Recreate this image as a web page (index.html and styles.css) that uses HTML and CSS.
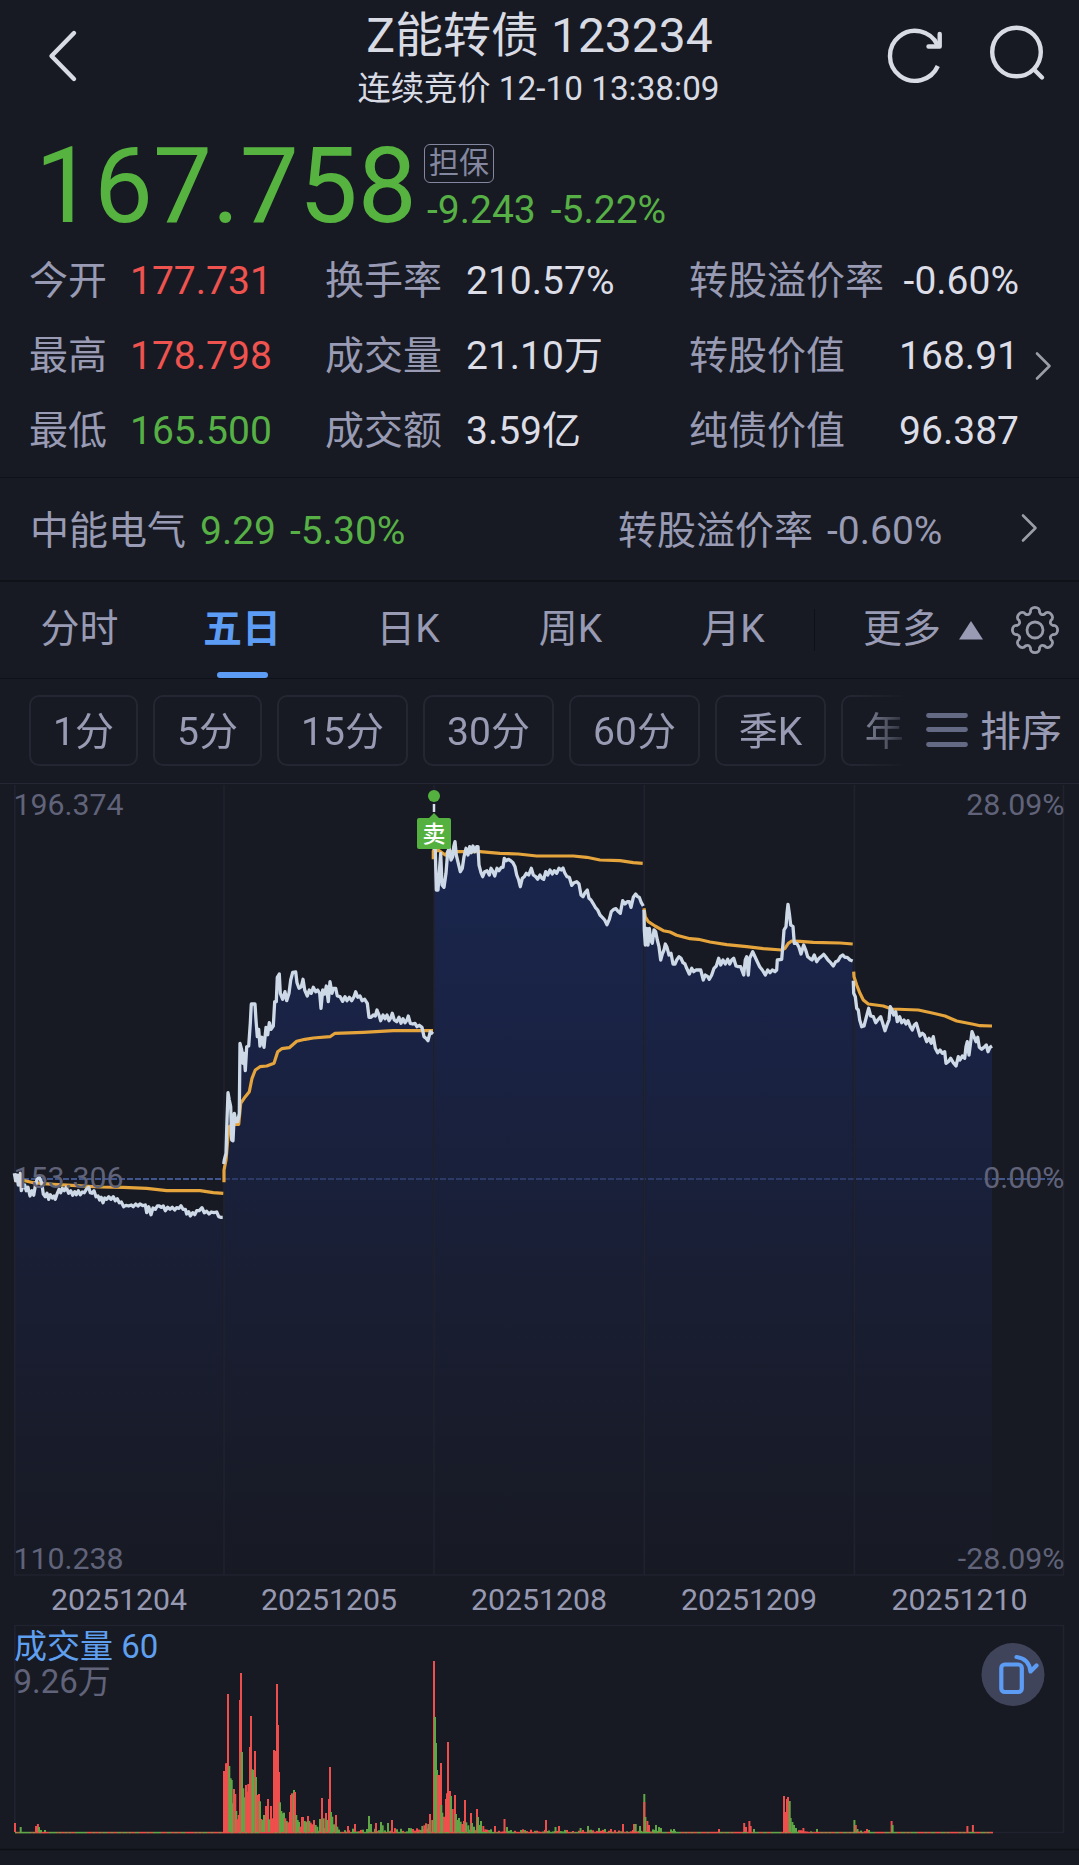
FILE: index.html
```html
<!DOCTYPE html>
<html lang="zh-CN">
<head>
<meta charset="utf-8">
<title>Z能转债 123234</title>
<link rel="stylesheet" href="styles.css">
</head>
<body>
<header class="header">
  <svg class="icon" width="230" height="120" viewBox="0 0 230 120"><path class="ico-line" d="M74 33 51.500 56 74 79"/></svg>
  <div class="heading">
    <h1 class="title">Z能转债 123234</h1>
    <p class="subtitle">连续竞价 12-10 13:38:09</p>
  </div>
  <svg class="icon" width="230" height="120" viewBox="849 0 230 120">
    <path class="ico-line flat" d="M937.800 66A25 25 0 1 1 937.500 45"/>
    <path class="ico-line" d="M939.700 34v12.500H928.500"/>
    <circle class="ico-line" cx="1016.500" cy="52" r="24.300"/>
    <path class="ico-line" d="m1034 69.500 8 8"/>
  </svg>
</header>

<section class="quote down">
  <div class="price">167.758</div>
  <div class="quote-side">
    <span class="badge">担保</span>
    <div class="delta"><span>-9.243</span><span>-5.22%</span></div>
  </div>
</section>

<section class="stats">
  <div class="stats-grid">
    <span>今开</span><b class="up">177.731</b><span>换手率</span><b>210.57%</b><span>转股溢价率</span><b class="end">-0.60%</b>
    <span>最高</span><b class="up">178.798</b><span>成交量</span><b>21.10万</b><span>转股价值</span><b class="end">168.91</b>
    <span>最低</span><b class="down">165.500</b><span>成交额</span><b>3.59亿</b><span>纯债价值</span><b class="end">96.387</b>
  </div>
  <svg class="icon chevron" width="18" height="30" viewBox="0 0 18 30"><path class="ico-thin" d="M2 2.500 14.500 15 2 27.500"/></svg>
</section>

<section class="related">
  <span class="rel-name">中能电气</span><span class="rel-price down">9.29</span><span class="rel-change down">-5.30%</span>
  <span class="rel-label">转股溢价率</span><span class="rel-rate">-0.60%</span>
  <svg class="icon rel-arrow" width="18" height="30" viewBox="0 0 18 30"><path class="ico-thin" d="M2 2.500 14.500 15 2 27.500"/></svg>
</section>

<nav class="tabs">
  <span class="tab">分时</span>
  <span class="tab wide active">五日</span>
  <span class="tab wide">日K</span>
  <span class="tab">周K</span>
  <span class="tab wide">月K</span>
  <i class="tab-split"></i>
  <span class="more">更多</span>
  <svg class="icon tri" width="26" height="20" viewBox="0 0 26 20"><path d="M13 1 25 19.500H1z"/></svg>
  <svg class="icon gear" width="52" height="52" viewBox="-26 -26 52 52">
    <path id="gear" class="ico-gear"/>
    <circle class="ico-gear" r="8"/>
  </svg>
</nav>

<section class="periods">
  <div class="chips">
    <span class="chip w1">1分</span><span class="chip w1">5分</span><span class="chip w2">15分</span><span class="chip w2">30分</span><span class="chip w2">60分</span><span class="chip w3">季K</span><span class="chip w3">年K</span>
  </div>
  <svg class="icon bars" width="42" height="36" viewBox="0 0 42 36"><path d="M2.500 3.500h37M2.500 17.500h37M2.500 32.500h37"/></svg>
  <span class="sort">排序</span>
</section>

<svg class="chart" width="1079" height="1082" viewBox="0 783 1079 1082">
  <defs>
    <linearGradient id="fill" gradientUnits="userSpaceOnUse" x1="0" y1="840" x2="0" y2="1575">
      <stop offset="0" stop-color="#1a264f"/>
      <stop offset=".3" stop-color="#192242"/>
      <stop offset=".6" stop-color="#191e33"/>
      <stop offset="1" stop-color="#171a23"/>
    </linearGradient>
  </defs>
  <path class="rule" d="M0 783.500H1079"/>
  <path class="dash" d="M15 1179H1064"/>
  <g id="areas"></g>
  <path class="dash over" d="M224 1179H992"/>
  <path class="grid" d="M14.800 785V1575M224 785V1575M434 785V1575M644.300 785V1575M854.400 785V1575M1063.500 785V1575M14 1575H1064"/>
  <path class="grid" d="M14.800 1832.500V1625.500H1063.500V1832.500H14.800"/>
  <g id="lines"></g>
  <g class="axis">
    <text x="13.500" y="815">196.374</text>
    <text x="13.500" y="1187.500">153.306</text>
    <text x="13.500" y="1569">110.238</text>
    <text class="r" x="1064.500" y="815">28.09%</text>
    <text class="r" x="1064.500" y="1187.500">0.00%</text>
    <text class="r" x="1064.500" y="1569">-28.09%</text>
  </g>
  <g class="dates">
    <text x="119" y="1610">20251204</text>
    <text x="329" y="1610">20251205</text>
    <text x="539" y="1610">20251208</text>
    <text x="749" y="1610">20251209</text>
    <text x="959.500" y="1610">20251210</text>
  </g>
  <path class="leader" d="M434 804v8"/>
  <circle class="sell" cx="434" cy="796" r="6"/>
  <path class="sell" d="M419 818h10l5-5 5 5h10q2 0 2 2v27q0 2-2 2H419q-2 0-2-2v-27q0-2 2-2z"/>
  <text class="sell-text" x="434" y="842">卖</text>
  <text class="vol-title" x="14" y="1658">成交量 60</text>
  <text class="vol-max" x="13.500" y="1693">9.26万</text>
  <g id="volume"></g>
  <circle class="rotate-bg" cx="1013" cy="1674.500" r="31.500"/>
  <g class="rotate">
    <rect x="1001.300" y="1664.500" width="20.500" height="27.500" rx="3.500"/>
    <path d="M1016.500 1657q12.500 1.500 14 14.500l6-6"/>
  </g>
  <path class="edge" d="M0 1849.500H1079"/>
</svg>
<script src="chart.js"></script>
</body>
</html>
```
FILE: styles.css
```css
* { box-sizing: border-box; }
body {
  margin: 0;
  width: 1079px;
  height: 1865px;
  overflow: hidden;
  background: #171a22;
  color: #989bb3;
  font-family: Roboto, "Noto Sans CJK SC", sans-serif;
  font-size: 39px;
  line-height: 50px;
}
.icon { display: block; fill: none; flex: none; }
.ico-line { stroke: #d9dbe4; stroke-width: 4.4; stroke-linecap: round; stroke-linejoin: round; }
.ico-line.flat { stroke-linecap: butt; }
.ico-thin { stroke: #9b9ca6; stroke-width: 2.6; stroke-linecap: round; stroke-linejoin: round; }
.ico-gear { stroke: #989ba9; stroke-width: 2.8; stroke-linejoin: round; }
.up { color: #ef5350; }
.down { color: #56b045; }

.header { display: grid; grid-template-columns: 230px 1fr 230px; height: 120px; color: #d9dbe4; text-align: center; white-space: nowrap; }
.heading { padding-top: 10px; }
.title { margin: 0 0 8px; font-size: 48px; font-weight: 400; line-height: 51px; }
.subtitle { margin: 0 0 0 -2px; font-size: 33.3px; line-height: 40px; }

.quote { display: flex; height: 124px; padding: 16px 0 0 35px; }
.price { width: 389px; font-size: 105px; line-height: 101px; color: #56b340; }
.quote-side { padding-top: 8px; }
.badge { display: block; width: 70px; height: 39px; border: 1.500px solid #8487a0; border-radius: 6px; color: #8487a0; font-size: 30px; line-height: 36px; text-align: center; }
.delta { display: flex; gap: 15px; padding-left: 3px; margin-top: 7px; line-height: 40px; }

.stats { display: flex; height: 234px; border-bottom: 1.500px solid #0f1118; }
.stats-grid { display: grid; grid-template-columns: 101px 195px 141px 223px 200px 130px; grid-auto-rows: 75px; width: 1019px; padding-left: 29px; line-height: 75px; white-space: nowrap; flex: none; }
.stats-grid b { font-weight: 400; color: #dcdde6; }
.stats-grid .up { color: #ef5350; }
.stats-grid .down { color: #56b045; }
.stats-grid .end { text-align: right; }
.chevron { margin: 107px 0 0 16px; }

.related { display: flex; align-items: center; height: 104px; padding: 4px 0 0 30px; border-bottom: 2px solid #10121a; white-space: nowrap; }
.rel-name { width: 170px; }
.rel-price { width: 90px; }
.rel-change { width: 328px; }
.rel-label { width: 209px; }
.rel-rate { width: 194px; }
.rel-arrow { margin-top: -6px; }

.tabs { display: flex; height: 97px; border-bottom: 1.500px solid #0f1118; white-space: nowrap; line-height: 95px; }
.tab { width: 159px; text-align: center; display: flex; flex-direction: column; align-items: center; }
.tab.wide { width: 166px; }
.tab.active { color: #5c9cf5; font-weight: 700; }
.tab.active::after { content: ""; width: 51px; height: 6px; margin-top: -5px; border-radius: 3px; background: #5c9cf5; }
.tab-split { width: 1px; height: 42px; margin: 27px 0 0 -2px; background: #0e1017; }
.more { margin-left: 48px; width: 95px; }
.tri { fill: #989bb3; margin-top: 38px; }
.gear { margin: 22px 0 0 25px; }

.periods { display: flex; height: 104px; padding: 16px 0 0 29px; white-space: nowrap; }
.chips { display: flex; gap: 15px; width: 873px; overflow: hidden; -webkit-mask-image: linear-gradient(90deg, #000 825px, transparent 885px); mask-image: linear-gradient(90deg, #000 825px, transparent 885px); }
.chip { flex: none; height: 71px; border: 2px solid #242732; border-radius: 10px; line-height: 70px; text-align: center; }
.w1 { width: 109px; }
.w2 { width: 131px; }
.w3 { width: 111px; }
.bars { margin: 17px 0 0 24px; stroke: #646984; stroke-width: 4.8; stroke-linecap: round; }
.sort { margin-left: 12px; font-size: 41px; line-height: 74px; }

.chart { display: block; fill: none; }
.rule { stroke: #252833; stroke-width: 1.200; }
.grid { stroke: #20222f; stroke-width: 1.600; }
.edge { stroke: #0e1017; stroke-width: 1.500; }
.dash { stroke: #40568c; stroke-width: 1.800; stroke-dasharray: 6 2; }
.dash.over { stroke: #2b3a66; }
.area { fill: url(#fill); }
.avg { stroke: #e5a43c; stroke-width: 3.200; stroke-linejoin: round; }
.line { stroke: #ced9e8; stroke-width: 3.300; stroke-linejoin: round; }
.axis { fill: #606379; font-size: 30.3px; }
.axis .r { text-anchor: end; }
.dates { fill: #9699b1; font-size: 30.3px; text-anchor: middle; }
.leader { stroke: #d8dfec; stroke-width: 2.500; }
.sell { fill: #54b13f; }
.sell-text { fill: #fff; font-size: 23px; font-weight: 500; text-anchor: middle; }
.vol-title { fill: #5f9ff0; font-size: 33px; }
.vol-max { fill: #606379; font-size: 33px; }
.rotate-bg { fill: #40445a; }
.rotate { stroke: #5c9cf5; stroke-width: 4.200; stroke-linecap: round; stroke-linejoin: round; }
.red { fill: #ee4f4c; }
.green { fill: #5fa746; }
```
FILE: chart.js
```js
// Each session: origin in page pixels, points in thirds of a pixel.
const sessions = [
  { ox: 0, oy: 940,
    line: "43,700 47,722 51,705 55,735 58,712 61,700 64,752 69,735 74,735 79,752 84,742 90,768 96,752 101,766 106,738 111,718 118,712 125,728 130,762 136,770 141,760 146,778 151,764 157,774 162,768 166,778 172,760 177,748 182,758 187,745 193,752 199,742 206,760 212,752 218,766 224,755 229,764 235,752 241,764 247,756 253,758 259,748 266,742 271,758 276,760 282,752 288,770 294,768 299,780 304,772 309,788 314,774 320,778 326,770 333,778 340,770 346,782 352,776 358,788 364,786 371,800 378,796 386,798 394,795 400,800 407,792 414,798 420,792 428,797 436,795 440,818 446,800 453,824 459,804 466,808 472,798 478,798 484,802 490,798 496,812 503,802 510,808 517,802 524,810 530,803 537,805 543,797 549,808 556,808 560,822 566,815 571,828 578,818 584,824 590,812 598,812 606,803 613,818 620,814 627,822 634,816 642,818 650,816 656,830 663,832 668,832",
    avg: "43,722 75,722 100,728 160,733 230,737 300,741 370,742 440,745 500,752 600,752 640,758 670,760" },
  { ox: 0, oy: 940,
    line: "671,672 673,660 678,640 681,540 684,458 688,480 692,500 695,600 699,602 703,520 708,545 713,545 718,520 720,310 725,330 729,370 732,340 736,392 740,320 746,318 751,250 754,192 765,192 768,240 772,290 776,268 780,318 786,292 792,322 798,262 803,284 808,248 813,268 820,258 824,185 829,185 832,112 838,102 841,160 848,178 855,155 860,182 867,160 872,120 878,97 887,96 891,128 897,145 904,140 909,118 914,150 922,168 928,150 934,160 940,142 947,155 953,150 959,160 963,205 968,150 974,162 979,138 985,185 990,125 996,160 1000,145 1007,145 1012,168 1020,170 1028,184 1035,170 1041,182 1048,172 1055,182 1062,170 1067,155 1073,172 1080,168 1086,182 1094,178 1102,190 1107,232 1113,232 1120,225 1126,228 1131,210 1137,225 1142,242 1149,225 1155,236 1161,225 1167,242 1173,232 1177,220 1183,240 1190,245 1197,232 1203,250 1209,236 1215,248 1221,240 1225,228 1231,250 1238,252 1245,250 1251,260 1258,256 1266,262 1272,290 1278,295 1284,302 1291,275 1299,282",
    avg: "672,727 672,690 678,660 683,600 688,560 700,553 716,553 722,490 736,470 748,455 756,415 766,390 780,380 800,378 822,370 833,335 845,326 868,323 890,304 915,298 940,294 990,290 1005,280 1090,277 1180,272 1299,272" },
  { ox: 400, oy: 780,
    line: "102,205 106,210 109,330 114,330 119,260 122,220 126,315 132,322 138,280 143,215 148,205 153,240 158,230 161,200 165,185 169,225 175,250 181,275 187,265 192,230 198,205 204,225 209,200 214,218 219,198 224,215 230,200 234,200 237,255 243,278 248,290 254,275 261,272 268,285 273,265 279,275 284,288 291,265 297,272 304,262 309,262 313,235 319,242 325,238 332,242 339,248 345,260 350,285 356,300 361,320 367,295 373,290 379,280 386,285 394,265 400,285 407,290 413,298 420,285 426,295 431,298 437,275 443,285 450,270 457,282 463,272 470,280 477,265 484,270 489,264 494,278 501,290 508,292 515,316 522,308 530,305 537,312 543,345 549,350 555,338 562,330 567,355 573,360 579,370 586,382 593,390 600,405 607,412 614,420 621,434 628,418 634,395 641,388 648,386 654,394 661,400 668,362 675,372 682,365 688,365 693,382 700,352 707,342 713,350 718,352 724,368 730,378",
    avg: "100,238 100,212 118,212 136,225 144,215 240,215 300,220 355,222 410,228 520,228 560,232 600,240 660,242 700,248 728,250" },
  { ox: 640, oy: 860,
    line: "12,150 13,210 16,255 20,205 24,255 28,205 32,240 37,250 42,210 47,215 52,240 57,260 62,300 67,282 72,270 76,252 81,262 87,285 93,280 99,312 105,312 110,300 117,290 123,295 129,308 135,312 140,325 148,342 155,325 161,335 168,330 175,330 182,330 190,360 196,345 203,350 208,358 215,345 222,325 229,318 236,295 242,315 249,300 256,312 263,298 269,312 275,300 281,295 288,318 295,320 302,320 311,345 316,300 320,290 325,345 329,295 338,275 345,290 352,305 359,320 367,330 376,345 383,330 390,338 397,330 405,335 410,330 412,300 425,298 429,250 432,210 438,200 441,160 444,133 448,160 452,195 459,200 463,250 470,250 477,262 483,282 491,255 497,270 503,290 509,295 516,300 523,285 530,305 537,295 544,290 551,283 557,290 564,300 572,308 580,318 587,305 594,302 601,290 608,285 615,292 622,292 630,300 638,303",
    avg: "12,145 16,170 25,185 45,198 70,212 90,216 110,226 150,236 175,238 210,246 260,254 320,260 370,266 425,270 435,265 445,250 455,243 480,244 520,247 600,249 638,252" },
  { ox: 640, oy: 860,
    line: "640,362 641,400 646,410 650,445 655,450 659,480 665,500 672,498 678,475 686,445 692,468 700,470 707,488 715,478 722,470 728,490 735,512 741,495 747,480 751,440 756,450 761,465 767,455 772,485 779,470 785,488 792,480 798,492 804,482 811,500 817,510 823,495 829,490 835,510 840,528 847,520 853,525 860,545 867,535 874,550 880,530 886,565 893,578 900,570 907,580 914,575 918,610 925,605 932,595 940,608 948,618 955,590 960,600 967,588 974,595 978,560 982,545 987,585 992,545 996,515 1002,530 1008,545 1013,532 1018,562 1025,568 1032,562 1039,555 1044,575 1050,562 1056,558",
    avg: "641,335 642,350 650,375 660,400 670,420 685,432 730,438 755,447 835,450 880,460 915,468 950,483 1000,493 1020,497 1056,498" }
];

const FLOOR = 1575;
let areas = "", lines = "";
for (const s of sessions) {
  const conv = str => str.split(" ").map(p => {
    const [x, y] = p.split(",").map(Number);
    return [(s.ox + x / 3).toFixed(1), (s.oy + y / 3).toFixed(1)];
  });
  const pts = conv(s.line);
  const d = pts.map(p => p.join(" ")).join("L");
  areas += `<path class="area" d="M${d}V${FLOOR}H${pts[0][0]}Z"/>`;
  lines += `<path class="avg" d="M${conv(s.avg).map(p => p.join(" ")).join("L")}"/><path class="line" d="M${d}"/>`;
}
document.getElementById("areas").innerHTML = areas;
document.getElementById("lines").innerHTML = lines;

// Volume bars: colour, x, height.
const BASE = 1832;
const early = "r72,393 r75,393 r78,370 r81,370 r84,162 g88,378 g92,415 g95,420 g98,490 r102,447 r106,462 g109,513 r112,538 r116,525 r120,180 r123,99 g126,336 g130,445 g134,472 r138,435 r141,455 r145,432 r150,321 r153,228 g157,388 g160,390 r165,333 g168,411 r172,465 r177,462 g180,484 r184,537 g187,540 g192,525 r198,498 r204,477 g207,538 r213,498 r216,535 r222,330 r226,333 r231,132 r234,255 r237,396 g240,487 g244,513 g248,520 g252,518 r256,535 g260,543 r264,547 r270,516 r273,465 r276,460 g282,450 r285,456 g289,525 g293,540 g297,546 r301,560 r306,531 r309,531 g314,543 g318,545 r324,528 g328,543 r332,548 r336,553 r342,540 g347,555 g352,560 g360,537 r366,474 g371,535 r378,519 g382,540 r387,477 r390,381 g393,516 g397,530 g402,553 r408,525 g412,560 r465,552 r444,558 g507,528 g513,552 r528,549 g543,546 g548,556 g564,549 r576,540 r651,565 g667,558 r673,556 r678,550 g685,552 r690,522 g697,540 r702,63 g705,231 g708,309 g711,390 r714,405 r718,405 r723,369 g724,495 g727,518 r732,530 r738,477 r741,460 r744,306 r750,453 g753,468 r758,507 r765,465 g768,522 g773,540 g777,534 g782,545 r787,552 r792,543 r795,480 g799,547 g805,556 r813,519 g816,549 g822,560 r831,507 g834,531 g838,555 g843,543 r850,558 r856,568 r885,558";
const late = "r15,9 g20.7,5 r36,6 r37.9,8 g39,5 g41,2 g45,2 r504.5,13 g507,5 r546,12 g555.5,5 r559,6 g580.6,4 g588,6 g599,4 g605,3 r611,3 r623,8 r634,8 g635.7,8 g640,6 g644.3,38 r644.3,30 g645.4,15 r647.4,11 r649,7 g656,7 g659,5 g661,4 g674,3 r719,3 r744.2,9 r746,5 r749.4,11 r750.7,6 g754,3 r784,36 r785.5,20 r787,33 r788,35 g789.7,31 g790.7,14 g792.4,10 g794,7 g796,4 r803.4,4 g817,3 g854.4,12 r855.8,7 g857.5,3 r867,3 r891.6,11 g892.6,7 r967.4,6 r972.9,7";
let vol = "";
const bar = (c, x, h) => {
  vol += `<rect class="${c === "r" ? "red" : "green"}" x="${(x - 1).toFixed(1)}" y="${(BASE - h).toFixed(1)}" width="2" height="${h.toFixed(1)}"/>`;
};

// Thin trading: low bars and the two-tone strip along the baseline.
let seed = 7;
const rnd = () => (seed = (seed * 1103515245 + 12345) % 2147483648) / 2147483648;
for (let x = 15; x < 992; x += 2) {
  const c = rnd() < 0.52 ? "r" : "g";
  vol += `<rect class="${c === "r" ? "red" : "green"}" x="${x}" y="1831.8" width="2" height="1.6"/>`;
  const busy = (x > 330 && x < 434) ? 4 : (x > 480 && x < 676) ? 3 : (x > 225 && x < 480) ? 6 : (x > 792 && x < 812) || (x > 854 && x < 870) ? 2 : 0;
  if (busy && rnd() < 0.75) bar(c, x, rnd() * busy);
}
const each = (list, f) => list.split(" ").forEach(e => {
  const [x, v] = e.slice(1).split(",").map(Number);
  f(e[0], x, v);
});
each(early, (c, x, top) => bar(c, 200 + x / 3, (576 - top) / 3));
each(late, bar);
document.getElementById("volume").innerHTML = vol;

// Eight-lobed gear outline.
let g = "";
for (let i = 0; i < 8; i++) {
  const at = (deg, r) => {
    const a = (i * 45 + deg) * Math.PI / 180;
    return (r * Math.sin(a)).toFixed(2) + " " + (-r * Math.cos(a)).toFixed(2);
  };
  g += `${i ? "L" : "M"}${at(-14, 18.5)}C${at(-13, 24.8)} ${at(13, 24.8)} ${at(14, 18.5)}Q${at(22.5, 15.4)} ${at(31, 18.5)}`;
}
document.getElementById("gear").setAttribute("d", g + "Z");
```
